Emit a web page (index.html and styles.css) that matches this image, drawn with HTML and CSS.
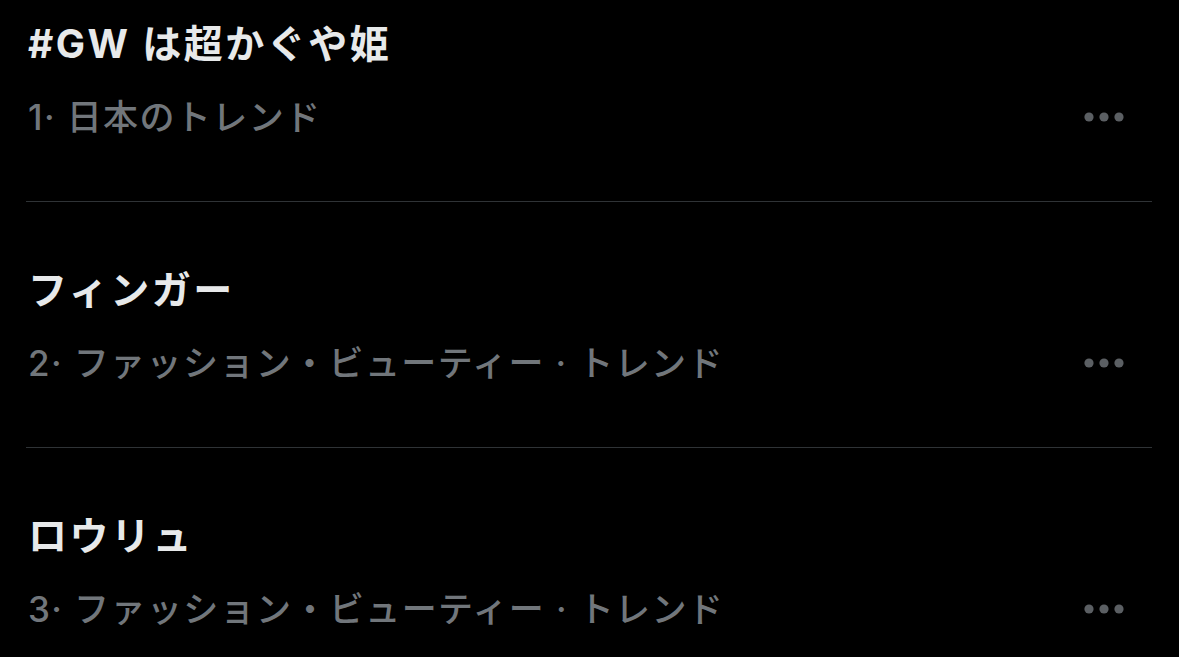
FILE: index.html
```html
<!DOCTYPE html>
<html lang="ja">
<head>
    <meta charset="UTF-8">
    <meta name="viewport" content="width=device-width, initial-scale=1.0">
    <title>トレンド</title>
    <link rel="stylesheet" href="styles.css">
</head>
<body>
    <div class="trend-list">
        <div class="trend">
            <div class="trend-title">#GW は超かぐや姫</div>
            <div class="trend-meta">
                <span class="trend-context">1· 日本のトレンド</span>
                <svg class="more" width="40" height="10" viewBox="0 0 40 10" fill="currentColor">
                    <circle cx="5" cy="5" r="4.6"/>
                    <circle cx="20" cy="5" r="4.6"/>
                    <circle cx="35" cy="5" r="4.6"/>
                </svg>
            </div>
        </div>

        <div class="trend">
            <div class="trend-title">フィンガー</div>
            <div class="trend-meta">
                <span class="trend-context">2· ファッション・ビューティー · トレンド</span>
                <svg class="more" width="40" height="10" viewBox="0 0 40 10" fill="currentColor">
                    <circle cx="5" cy="5" r="4.6"/>
                    <circle cx="20" cy="5" r="4.6"/>
                    <circle cx="35" cy="5" r="4.6"/>
                </svg>
            </div>
        </div>

        <div class="trend">
            <div class="trend-title">ロウリュ</div>
            <div class="trend-meta">
                <span class="trend-context">3· ファッション・ビューティー · トレンド</span>
                <svg class="more" width="40" height="10" viewBox="0 0 40 10" fill="currentColor">
                    <circle cx="5" cy="5" r="4.6"/>
                    <circle cx="20" cy="5" r="4.6"/>
                    <circle cx="35" cy="5" r="4.6"/>
                </svg>
            </div>
        </div>
    </div>
</body>
</html>
```

FILE: styles.css
```css
:root {
    --bg-color: #000000;
    --text-color: #e7e9ea;
    --muted-color: #71767b;
    --dots-color: #5b5f63;
    --border-color: #2f3336;
}

body {
    margin: 0;
    background-color: var(--bg-color);
    color: var(--text-color);
    font-family: Inter, "Noto Sans CJK JP", sans-serif;
    overflow: hidden;
}

.trend-list {
    padding: 0 27px 0 26px;
}

.trend {
    padding: 64px 0 60px 2px;
    border-bottom: 1px solid var(--border-color);
}

.trend:first-child {
    padding-top: 20px;
}

.trend-title {
    font-size: 39px;
    font-weight: 700;
    line-height: 48px;
    letter-spacing: 2.5px;
}

.trend-meta {
    display: flex;
    align-items: center;
    justify-content: space-between;
    margin-top: 25px;
    height: 48px;
}

.trend-context {
    font-size: 35px;
    font-weight: 500;
    line-height: 48px;
    color: var(--muted-color);
    letter-spacing: 1.4px;
}

.more {
    color: var(--dots-color);
    margin-right: 28px;
}
```
